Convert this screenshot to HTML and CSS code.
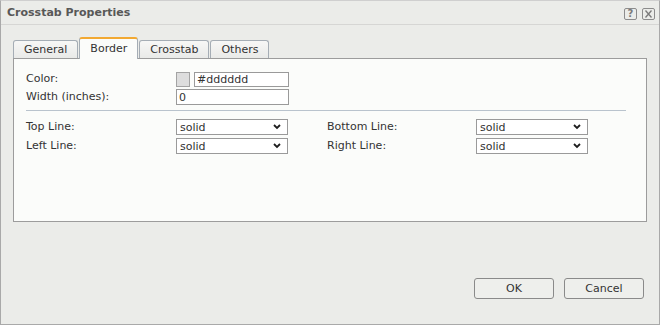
FILE: index.html
```html
<!DOCTYPE html>
<html lang="en">
<head>
    <meta charset="UTF-8">
    <title>Crosstab Properties</title>
    <link rel="stylesheet" href="styles.css">
</head>
<body>
    <div class="dialog">
        <div class="titlebar">
            <span class="title">Crosstab Properties</span>
            <div class="tools">
                <span class="tool help">?</span>
                <svg class="tool" width="13" height="12" viewBox="0 0 13 12">
                    <rect x="0.5" y="0.5" width="12" height="11" rx="1.5" fill="none" stroke="#8c8c8c"/>
                    <path d="M3.5 2.5 L9.5 9.5 M9.5 2.5 L3.5 9.5" stroke="#7a7a7a" stroke-width="1.3"/>
                </svg>
            </div>
        </div>

        <div class="content">
            <div class="tabs">
                <div class="tab">General</div>
                <div class="tab active">Border</div>
                <div class="tab">Crosstab</div>
                <div class="tab">Others</div>
            </div>

            <div class="panel">
                <div class="grid">
                    <label>Color:</label>
                    <div class="color-field">
                        <span class="swatch"></span>
                        <input type="text" class="input short" value="#dddddd">
                    </div>
                    <label>Width (inches):</label>
                    <input type="text" class="input" value="0">
                </div>

                <div class="separator"></div>

                <div class="grid lines">
                    <label>Top Line:</label>
                    <div class="select-wrap">
                        <select><option>solid</option></select>
                        <svg class="chevron" width="8" height="6" viewBox="0 0 8 6"><path d="M1 1 L4 4 L7 1" fill="none" stroke="#1e1e1e" stroke-width="1.8"/></svg>
                    </div>
                    <label>Bottom Line:</label>
                    <div class="select-wrap">
                        <select><option>solid</option></select>
                        <svg class="chevron" width="8" height="6" viewBox="0 0 8 6"><path d="M1 1 L4 4 L7 1" fill="none" stroke="#1e1e1e" stroke-width="1.8"/></svg>
                    </div>

                    <label>Left Line:</label>
                    <div class="select-wrap">
                        <select><option>solid</option></select>
                        <svg class="chevron" width="8" height="6" viewBox="0 0 8 6"><path d="M1 1 L4 4 L7 1" fill="none" stroke="#1e1e1e" stroke-width="1.8"/></svg>
                    </div>
                    <label>Right Line:</label>
                    <div class="select-wrap">
                        <select><option>solid</option></select>
                        <svg class="chevron" width="8" height="6" viewBox="0 0 8 6"><path d="M1 1 L4 4 L7 1" fill="none" stroke="#1e1e1e" stroke-width="1.8"/></svg>
                    </div>
                </div>
            </div>

            <div class="actions">
                <button class="button">OK</button>
                <button class="button">Cancel</button>
            </div>
        </div>
    </div>
</body>
</html>
```

FILE: styles.css
```css
body {
    margin: 0;
    font-family: 'DejaVu Sans', sans-serif;
    font-size: 11px;
    color: #333;
    background-color: #ebece9;
}

.dialog {
    width: 660px;
    height: 325px;
    box-sizing: border-box;
    border: 1px solid #a9a9a9;
    border-top-color: #cfcfcf;
    background-color: #ebece9;
}

/* Barre de titre */
.titlebar {
    height: 23px;
    border-bottom: 1px solid #d6d6d4;
    display: flex;
    align-items: center;
    justify-content: space-between;
    padding: 0 4px 0 6px;
}

.title {
    font-weight: bold;
    color: #585858;
}

.tools {
    display: flex;
    gap: 5px;
    margin-top: 2px;
}

.tool {
    display: block;
}

.help {
    box-sizing: border-box;
    width: 13px;
    height: 12px;
    border: 1px solid #8c8c8c;
    border-radius: 2px;
    font-size: 10px;
    font-weight: bold;
    line-height: 10px;
    text-align: center;
    color: #7a7a7a;
}

.content {
    padding: 12px 12px 0 12px;
}

/* Onglets */
.tabs {
    display: flex;
    align-items: flex-end;
    gap: 1px;
    height: 21px;
}

.tab {
    box-sizing: border-box;
    height: 18px;
    padding: 0 10px;
    line-height: 17px;
    border: 1px solid #a5adb5;
    border-bottom: none;
    border-radius: 3px 3px 0 0;
    background: linear-gradient(#f7f7f6, #e9eae8);
    color: #333;
}

.tab.active {
    height: 22px;
    margin-bottom: -1px;
    line-height: 19px;
    background: #fbfcfa;
    border-top: 2px solid #f2a933;
    position: relative;
}

/* Panneau */
.panel {
    box-sizing: border-box;
    height: 164px;
    border: 1px solid #9c9c9c;
    background-color: #fbfcfa;
    padding: 12px 0 0 12px;
}

.grid {
    display: grid;
    grid-template-columns: 150px 113px;
    row-gap: 2px;
    align-items: center;
}

.grid.lines {
    grid-template-columns: 150px 151px 149px 113px;
    row-gap: 3px;
}

.grid label {
    line-height: 16px;
}

.color-field {
    display: flex;
    gap: 4px;
}

.swatch {
    box-sizing: border-box;
    width: 15px;
    height: 15px;
    border: 1px solid #a3a3a3;
    background-color: #dddddd;
}

.input {
    box-sizing: border-box;
    width: 113px;
    height: 16px;
    margin: 0;
    padding: 0 2px;
    border: 1px solid #9a9a9a;
    background: #fff;
    font-family: 'DejaVu Sans', sans-serif;
    font-size: 11px;
    color: #333;
}

.input.short {
    width: 95px;
    height: 15px;
}

.separator {
    height: 1px;
    background-color: #b9c3cd;
    margin: 5px 20px 8px 0;
}

.select-wrap {
    position: relative;
    width: 113px;
    height: 16px;
}

.select-wrap select {
    appearance: none;
    box-sizing: border-box;
    width: 112px;
    height: 16px;
    margin: 0;
    padding: 0 0 0 3px;
    border: 1px solid #9a9a9a;
    border-radius: 0;
    background: #fff;
    font-family: 'DejaVu Sans', sans-serif;
    font-size: 11px;
    color: #333;
}

.chevron {
    position: absolute;
    top: 5px;
    right: 8px;
}

/* Boutons */
.actions {
    display: flex;
    justify-content: flex-end;
    gap: 10px;
    margin-top: 56px;
    padding-right: 3px;
}

.button {
    box-sizing: border-box;
    width: 80px;
    height: 21px;
    border: 1px solid #8a8a8a;
    border-radius: 3px;
    background-color: #eeefec;
    font-family: 'DejaVu Sans', sans-serif;
    font-size: 11px;
    color: #333;
}
```
